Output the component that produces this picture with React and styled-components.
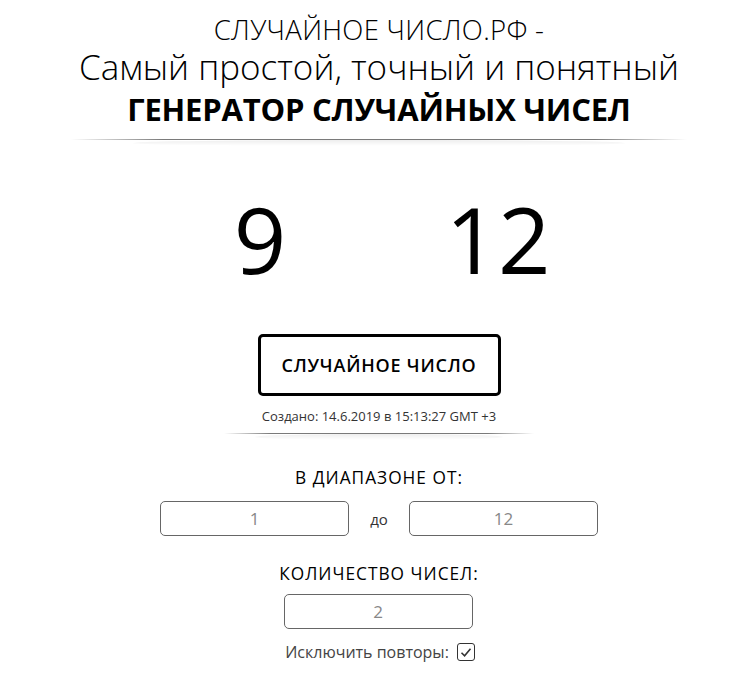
import React from 'react';
import styled, { createGlobalStyle } from 'styled-components';

const GlobalStyle = createGlobalStyle`
	body {
		margin: 0;
		background: #fff;
		font-family: "Open Sans", "Noto Sans", sans-serif;
		color: #000;
	}
`;

const Page = styled.div`
	display: flex;
	flex-direction: column;
	align-items: center;
	padding: 12px 0 0 20px;
`;

const Header = styled.header`
	display: flex;
	flex-direction: column;
	align-items: center;
	width: 616px;
`;

const SiteName = styled.div`
	font-size: 27.5px;
	font-weight: 300;
	line-height: 35px;
	letter-spacing: 0.3px;
`;

const Slogan = styled.div`
	font-size: 35px;
	font-weight: 300;
	line-height: 40px;
`;

const Title = styled.h1`
	margin: 0;
	font-size: 31px;
	font-weight: 700;
	line-height: 44px;
	letter-spacing: -0.2px;
`;

const Divider = styled.div`
	position: relative;
	width: ${(props) => props.width}px;
	height: 1px;
	margin-top: ${(props) => props.top || 0}px;
	background: linear-gradient(to right, rgba(120, 120, 120, 0), #7a7a7a 15%, #7a7a7a 85%, rgba(120, 120, 120, 0));
	&::after {
		content: '';
		position: absolute;
		left: 10%;
		right: 10%;
		top: 1px;
		height: 6px;
		background: linear-gradient(to bottom, rgba(0, 0, 0, 0.07), rgba(0, 0, 0, 0));
		border-radius: 50%;
	}
`;

const Numbers = styled.div`
	display: grid;
	grid-template-columns: 200px 200px;
	gap: 38px;
	margin-top: 44px;
	font-size: 92px;
	font-weight: 400;
	line-height: 110px;
	text-align: center;
`;

const GenerateButton = styled.button`
	margin-top: 40px;
	width: 243px;
	height: 62px;
	border: 3px solid #000;
	border-radius: 5px;
	background: #fff;
	font-family: "Open Sans", sans-serif;
	font-size: 18px;
	font-weight: 600;
	letter-spacing: 0.8px;
	color: #000;
	padding: 0;
`;

const Created = styled.div`
	margin-top: 12px;
	font-size: 13px;
	color: #333;
	line-height: 17px;
`;

const Label = styled.div`
	margin-top: ${(props) => props.top}px;
	font-size: 17.3px;
	font-weight: 500;
	letter-spacing: 1px;
	line-height: 24px;
`;

const RangeRow = styled.div`
	display: flex;
	align-items: center;
	gap: 20px;
	margin-top: 11px;
`;

const Field = styled.div`
	width: 187px;
	height: 33px;
	border: 1px solid #666;
	border-radius: 5px;
	display: flex;
	align-items: center;
	justify-content: center;
	font-size: 17px;
	color: #888;
`;

const To = styled.span`
	font-size: 15px;
	color: #333;
	width: 20px;
	text-align: center;
`;

const CountField = styled(Field)`
	margin-top: 8px;
	margin-right: 2px;
`;

const RepeatRow = styled.label`
	display: flex;
	align-items: center;
	gap: 8px;
	margin-top: 13px;
	padding-left: 2px;
	font-size: 16px;
	color: #444;
	line-height: 20px;
`;

const Check = styled.span`
	width: 16px;
	height: 16px;
	border: 1px solid #333;
	border-radius: 3px;
	display: flex;
	align-items: center;
	justify-content: center;
`;

const App = () => {
	return (
		<>
			<GlobalStyle />
			<Page>
				<Header>
					<SiteName>СЛУЧАЙНОЕ ЧИСЛО.РФ -</SiteName>
					<Slogan>Самый простой, точный и понятный</Slogan>
					<Title>ГЕНЕРАТОР СЛУЧАЙНЫХ ЧИСЕЛ</Title>
				</Header>
				<Divider width={616} top={8} />
				<Numbers>
					<span>9</span>
					<span>12</span>
				</Numbers>
				<GenerateButton>СЛУЧАЙНОЕ ЧИСЛО</GenerateButton>
				<Created>Создано: 14.6.2019 в 15:13:27 GMT +3</Created>
				<Divider width={310} top={8} />
				<Label top={32}>В ДИАПАЗОНЕ ОТ:</Label>
				<RangeRow>
					<Field>1</Field>
					<To>до</To>
					<Field>12</Field>
				</RangeRow>
				<Label top={26}>КОЛИЧЕСТВО ЧИСЕЛ:</Label>
				<CountField>2</CountField>
				<RepeatRow>
					Исключить повторы:
					<Check>
						<svg width="12" height="11" viewBox="0 0 12 11">
							<path d="M1.5 5.8 L4.6 8.8 L10.5 1.8" fill="none" stroke="#333" strokeWidth="1.6" />
						</svg>
					</Check>
				</RepeatRow>
			</Page>
		</>
	);
};

export default App;
